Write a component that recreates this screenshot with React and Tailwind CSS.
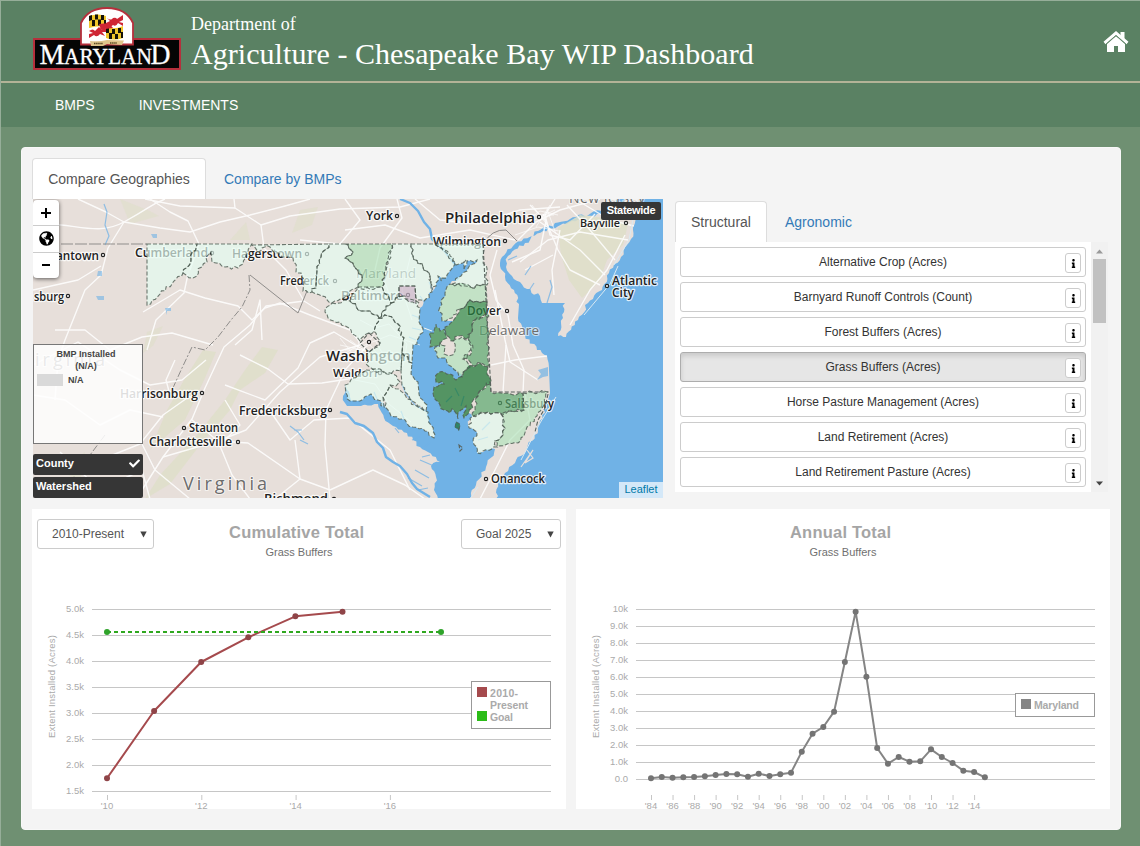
import React from "react";
import { FaInfo, FaCheck, FaGlobeAmericas } from "react-icons/fa";

const PALE = "#e4fcf2";
const LIGHT = "#b2e3bc";
const MID = "#57a66b";
const STRONG = "#2a8742";
const DARK = "#0f702b";

// Adds a small repeatable wobble to natural borders; straight survey lines stay straight.
function noise(a, b, c) {
  const v = Math.sin(a * 12.9898 + b * 78.233 + c * 37.719) * 43758.5453;
  return (v - Math.floor(v)) * 2 - 1;
}

function roughSegment(a, b) {
  const dx = b[0] - a[0];
  const dy = b[1] - a[1];
  const len = Math.hypot(dx, dy);
  if (len < 5 || len > 60 || Math.abs(dx) < 2 || Math.abs(dy) < 1) return [b];
  const flip = a[0] > b[0];
  const [s, e] = flip ? [b, a] : [a, b];
  const n = Math.max(2, Math.round(len / 3.2));
  const pts = [];
  for (let i = 1; i < n; i++) {
    const t = i / n;
    const k = noise(s[0] + e[0], s[1] + e[1], i) * 1.9;
    pts.push([s[0] + (e[0] - s[0]) * t - ((e[1] - s[1]) / len) * k, s[1] + (e[1] - s[1]) * t + ((e[0] - s[0]) / len) * k]);
  }
  if (flip) pts.reverse();
  return [...pts, b];
}

function roughen(d) {
  const nums = d.match(/-?\d+(\.\d+)?/g).map(Number);
  const pts = [];
  for (let i = 0; i < nums.length; i += 2) pts.push([nums[i], nums[i + 1]]);
  let out = `M${pts[0].join(" ")}`;
  pts.forEach((p, i) => {
    roughSegment(p, pts[(i + 1) % pts.length]).forEach(([x, y]) => {
      out += ` L${x.toFixed(1)} ${y.toFixed(1)}`;
    });
  });
  return out + "Z";
}

const counties = [
  [PALE, "M147 244 L197 244 L191 259 L183 273 L172 284 L160 294 L147 305Z"],
  [PALE, "M197 244 L252 244 L246 255 L243 264 L238 268 L225 267 L216 263 L212 262 L211 252 L202 267 L193 278 L183 273 L191 259Z"],
  [PALE, "M252 245 L329 244 L321 257 L317 270 L316 285 L312 292 L303 291 L304 281 L301 273 L296 272 L293 258 L285 257 L278 253 L270 247 L262 248 L258 252Z"],
  [PALE, "M329 244 L345 244 L353 252 L345 258 L354 266 L362 275 L358 287 L346 296 L332 303 L322 296 L312 292 L316 285 L317 270 L321 257Z"],
  [LIGHT, "M345 244 L392 244 L390 254 L386 270 L382 287 L370 289 L358 287 L362 275 L354 266 L345 258 L353 252Z"],
  [PALE, "M392 244 L411 244 L413 256 L423 267 L430 276 L432 292 L424 301 L416 298 L415 286 L399 286 L399 297 L391 303 L382 287 L386 270Z"],
  [PALE, "M411 244 L435 244 L447 251 L455 264 L447 275 L441 281 L438 276 L436 286 L432 290 L430 276 L423 267 L413 256Z"],
  [PALE, "M435 244 L483 244 L487 285 L470 287 L452 284 L461 276 L467 271 L473 264 L477 260 L467 261 L464 270 L466 260 L456 265 L448 254Z"],
  [PALE, "M358 287 L382 287 L391 303 L383 311 L379 318 L370 311 L361 311 L350 301Z"],
  [PALE, "M332 303 L350 301 L361 311 L370 311 L379 318 L374 331 L369 333 L360 341 L351 330 L340 322 L328 318 L325 312Z"],
  [PALE, "M391 303 L399 297 L416 301 L420 308 L419 322 L423 329 L417 344 L413 345 L412 363 L402 353 L403 341 L398 324 L388 316 L379 318 L383 311Z"],
  [PALE, "M379 318 L388 316 L398 324 L403 341 L402 353 L401 371 L387 374 L374 370 L366 364 L369 352 L380 343 L374 331Z"],
  [PALE, "M402 353 L412 363 L411 374 L418 382 L419 394 L427 405 L426 411 L418 406 L409 396 L402 386 L401 371Z"],
  [PALE, "M366 370 L380 369 L393 374 L400 382 L396 386 L390 385 L383 397 L384 407 L378 400 L371 394 L360 401 L350 401 L346 393 L345 385Z"],
  [PALE, "M390 385 L399 389 L407 399 L418 407 L428 412 L431 425 L434 438 L425 431 L413 427 L402 419 L391 416 L385 407 L383 397Z"],
  [LIGHT, "M450 284 L461 283 L471 287 L486 285 L487 302 L470 300 L460 309 L452 318 L442 321 L440 307 L445 293Z"],
  [STRONG, "M487 302 L470 300 L460 309 L453 321 L445 327 L446 335 L451 341 L458 336 L469 338 L473 321 L487 313Z"],
  [STRONG, "M436 324 L440 331 L445 329 L447 338 L441 342 L436 346 L430 347 L431 338 L429 333 L434 333Z"],
  [MID, "M487 313 L475 320 L468 338 L472 352 L463 358 L473 366 L481 363 L489 366Z"],
  [LIGHT, "M453 341 L462 337 L469 340 L473 349 L463 359 L470 367 L462 377 L452 367 L446 358 L438 358 L434 350 L440 343 L445 346 L444 354 L449 356 L455 351Z"],
  [DARK, "M488 367 L480 363 L474 367 L468 366 L463 376 L456 380 L450 374 L438 373 L436 382 L444 384 L434 387 L433 393 L440 405 L444 410 L450 413 L452 409 L458 419 L461 410 L466 406 L464 418 L469 413 L478 393 L490 384Z"],
  [MID, "M490 382 L491 392 L523 394 L524 410 L500 413 L488 412 L472 416 L478 394Z"],
  [LIGHT, "M523 393 L548 392 L545 403 L537 416 L527 427 L518 443 L497 446 L495 441 L503 435 L505 428 L501 414 L524 410Z"],
  [PALE, "M473 416 L488 412 L500 413 L505 428 L503 435 L495 441 L497 447 L477 453 L473 442 L477 432 L468 425Z"],
  [DARK, "M456 422 L460 424 L459 431 L455 428Z"],
  ["#cdb9cf", "M399 286 L415 286 L416 304 L409 302 L405 296 L399 296Z"],
].map(([c, d]) => [c, roughen(d)]);

const land = [
  "M33 199 L620 199 L604 210 L570 219 L538 231 L513 246 L502 257 L500 266 L505 277 L514 290 L519 304 L518 318 L525 335 L537 350 L547 356 L549 370 L550 393 L546 403 L538 430 L527 448 L515 463 L505 473 L498 483 L496 499 L469 499 L476 485 L486 467 L495 449 L477 453 L473 442 L477 432 L468 425 L472 417 L469 413 L464 418 L466 406 L461 410 L458 419 L452 409 L450 413 L444 410 L440 405 L433 393 L434 387 L444 384 L436 382 L438 373 L450 374 L456 380 L463 376 L452 367 L446 358 L438 358 L434 350 L440 343 L446 335 L445 327 L453 321 L442 321 L440 307 L445 293 L450 284 L461 276 L467 271 L473 264 L477 260 L467 261 L464 270 L466 260 L456 265 L455 264 L447 275 L441 281 L438 276 L436 286 L432 292 L424 301 L420 308 L419 322 L423 329 L417 344 L413 345 L412 363 L411 374 L418 382 L419 394 L427 405 L426 411 L431 425 L434 438 L425 431 L413 427 L402 419 L391 416 L385 407 L378 400 L371 394 L360 401 L350 401 L345 385 L343 396 L347 406 L361 406 L378 404 L384 418 L396 427 L407 433 L420 447 L440 462 L431 466 L436 477 L434 490 L438 499 L33 499Z",
  "M640 199 L636 218 L631 239 L621 257 L609 273 L602 290 L588 303 L578 320 L566 337 L558 336 L563 318 L565 303 L542 303 L540 296 L527 289 L512 276 L506 267 L508 256 L525 243 L543 231 L572 221 L607 212 L625 199Z",
  "M436 324 L440 331 L445 329 L447 338 L441 342 L436 346 L430 347 L431 338 L429 333 L434 333Z",
].map(roughen);

const roads = [
  "M33 225 C70 220 95 238 124 222 S150 205 165 199", "M78 199 L106 212 L124 222 L108 248 L101 275 L85 290 L65 340 L58 360 L55 400",
  "M124 222 L160 228 L190 232 L220 222 L250 215 L285 206 L310 199", "M150 199 L170 212 L188 221 L199 244 L190 270",
  "M234 199 L235 208 L261 225 L290 216 L340 209 L400 207 L430 199", "M235 208 L180 206 L145 199", "M261 225 L264 248 L286 270 L304 301 L320 311",
  "M33 290 L78 280 L101 266", "M55 330 L85 330 L110 350 L142 337 L172 333 L213 345", "M33 365 L78 342 L120 370 L150 385 L182 380 L206 360",
  "M143 312 L180 290 L205 298 L238 306 L252 320 L265 308 L280 303 L310 315 L350 330 L362 345", "M188 274 L184 293 L156 320 L147 350",
  "M304 301 L266 306 L250 325 L224 347 L205 388 L192 419 L163 457 L142 490", "M262 340 L260 300 L252 330 L235 345", "M360 345 L320 357 L280 392 L246 430 L218 441 L163 457",
  "M365 348 L345 370 L326 410 L325 445 L330 499", "M360 348 L334 332 L310 343 L298 368 L265 400 L225 385", "M218 441 L248 443 L300 479 L330 490", "M192 420 L218 441 L232 475 L250 499",
  "M240 355 L268 369 L288 384 L322 383 L355 378", "M190 396 L163 415 L140 444 L100 460 L33 470", "M268 408 L290 440 L314 420 L350 418 L390 450 L410 490", "M225 400 L240 425 L225 440",
  "M330 490 L373 470 L405 485 L425 499", "M275 499 L300 479 L295 440", "M60 452 L100 490 L142 470 L150 499", "M142 444 L155 470 L190 499",
  "M345 230 L385 225 L420 238 L470 230 L515 240", "M397 199 L402 218 L380 248 L375 270", "M415 199 L440 220 L478 224 L520 210 L560 207", "M345 199 L360 220 L340 244 L300 240",
  "M497 250 L490 275 L496 300 L508 315 L513 345 L524 370 L523 393", "M495 290 L505 340 L510 362 L538 380", "M491 365 L515 360 L547 356", "M506 345 L503 392", "M525 394 L530 420 L510 440 L495 470 L480 499",
  "M518 240 L536 222 L560 210 L600 199", "M543 214 L558 250 L570 270 L600 285", "M520 262 L548 240 L580 232 L628 240", "M560 230 L552 270 L554 295", "M540 222 L580 250 L605 275", "M567 205 L590 230 L615 260", "M575 199 L610 220 L634 226", "M553 255 L525 270", "M570 325 L590 290 L607 270 L625 235",
  "M555 199 L545 215 L550 235 L570 240 L595 214", "M530 205 L546 221 L540 250 L512 262", "M33 395 L65 400 L100 425 L130 410 L163 417", "M175 360 L166 380 L170 395 L192 397",
];

const locals = [
  "M360 320 l15 8 l14 -4 l18 20 l-4 22 l-16 8 M390 248 l-8 25 l10 30 l-20 30 M412 250 l-10 40 l10 30 M420 345 l-30 -10 l-30 12 M355 380 l20 4 l14 20 l22 18",
  "M340 338 l12 15 l18 -8 l10 12 M345 350 h28 M350 340 l24 18 M357 360 l18 -27 M337 358 l34 -20 M360 335 l-5 26 M375 340 l10 18 M340 345 l26 6",
  "M520 225 l20 -14 l18 4 M524 215 h30 M530 222 l25 -12 M532 205 l16 21 M550 205 l-14 22 M515 235 l23 -8 l21 4 M547 209 l9 25",
];

const waters = [
  "M400 199 L410 203 L418 211 L424 222 L430 229 L432 239 L444 250 L456 266",
  "M340 412 L347 414 L355 423 L364 426 L373 433 L377 442 L383 448 L386 457 L393 462 L400 466 L407 474 L412 483 L417 489 L430 497",
];
const creeks = [
  "M104 204 L107 212 L105 225 L109 236 L105 245", "M547 303 L552 287 L550 280 M525 275 l6 -9 M508 260 l9 -4 M530 289 l4 -6",
  "M427 412 L415 405 L406 394 L402 384", "M290 426 l8 6 l6 8 M300 440 l8 4 M294 430 l8 0", "M425 303 l-5 -7 M433 290 l-4 -8 M440 286 l2 -9",
  "M412 440 l8 -3 M424 448 l6 -6 M420 460 l14 6 M415 470 l14 8 M408 478 l14 8 M418 490 l10 -2 M395 428 l4 5 M430 455 l-8 2",
  "M420 318 l-8 -3 M421 330 l-9 -2 M416 340 l-7 -3 M413 355 l-5 0 M378 401 l-4 -9 M404 419 l-3 -8 M482 430 l8 -8 M478 440 l10 -3 M455 388 l4 8 M446 402 l6 -6 M464 396 l-3 10",
];

const labels = [
  [366, 220, 12, "York", 27], [445, 223, 15, "Philadelphia", 90], [433, 246, 12, "Wilmington", 68], [580, 227, 11.5, "Bayville", 40],
  [612, 285, 12, "Atlantic", 45], [612, 297, 12, "City", 22], [467, 315, 12, "Dover", 34], [135, 257, 12, "Cumberland", 73],
  [232, 258, 12, "Hagerstown", 70], [280, 285, 12, "Frederick", 49], [341, 300, 12, "Baltimore", 62], [326, 361, 14.5, "Washington", 85],
  [333, 377, 11.5, "Waldorf", 45], [120, 398, 12, "Harrisonburg", 78], [239, 415, 12, "Fredericksburg", 88], [189, 432, 12, "Staunton", 49],
  [149, 446, 12, "Charlottesville", 83], [491, 483, 12, "Onancock", 54], [505, 408, 12, "Salisbury", 49], [264, 503, 13, "Richmond", 64],
  [34, 301, 12, "sburg", 30], [56, 260, 12, "antown", 43],
];
const dots = [[397, 216], [539, 217], [505, 241], [626, 223], [607, 286], [507, 311], [212, 253], [307, 254], [335, 281], [408, 295], [369, 342], [380, 373], [202, 393], [330, 410], [184, 428], [238, 442], [486, 479], [500, 403], [334, 499], [103, 255], [68, 296]];

function BaseMap() {
  return (
    <svg viewBox="33 199 630 299" className="block h-full w-full" fontFamily="'Open Sans','Noto Sans',sans-serif">
      <rect x="33" y="199" width="630" height="300" fill="#70b2e6" />
      <g fill="#e7dfda">{land.map((d) => <path key={d} d={d} />)}</g>
      <g fill="#dedfc8">
        <path d="M558 228 L580 215 L605 218 L628 224 L623 245 L607 260 L599 282 L582 298 L569 280 L561 255Z" opacity=".85" />
        <path d="M167 410 L184 380 L203 350 L216 352 L205 378 L185 420 L150 450Z" opacity=".8" />
        <path d="M245 370 L262 347 L278 350 L265 373 L240 390 L230 410 L200 445 L170 484 L145 499 L160 475 L197 435 L225 400Z" opacity=".8" />
        <path d="M120 199 L150 211 L159 216 L130 224 Z M230 240 L246 222 L250 240Z M300 210 l18 -3 l-6 18 l-20 8Z" opacity=".55" />
        <path d="M147 332 l16 -6 l-10 20 l-10 7Z M60 470 l25 -18 l-5 30Z" opacity=".55" />
      </g>
      <g fill="none" stroke="#fff" strokeWidth="1.4" strokeLinejoin="round" opacity=".85">{roads.map((d) => <path key={d} d={d} />)}</g>
      <g fill="none" stroke="#fff" strokeWidth=".8" opacity=".8">{locals.map((d) => <path key={d} d={d} />)}</g>
      <g fill="none" stroke="#70b2e6" strokeWidth="2.4" strokeLinejoin="round">{waters.map((d) => <path key={d} d={d} />)}</g>
      <g fill="none" stroke="#70b2e6" strokeWidth="1.2" strokeLinejoin="round" opacity=".75">{creeks.map((d) => <path key={d} d={d} />)}</g>
      <g fill="#70b2e6">
        <path d="M97 276 h5 v-5 h-4Z M151 234 h6 v4 h-4Z M96 296 h8 v4 h-6Z M165 308 h6 v3 h-4 v4Z" opacity=".6" />
        <path d="M345 384 l3 18 l15 3 l13 -4 l-5 -4 l-11 4 l-9 -1Z" />
        <path d="M538 370 l10 -3 v9 l-5 1 l-6 3 l4 -6Z" opacity=".7" />
      </g>
      <path d="M637 199 L629 240 L614 265 M556 397 L540 423 L521 460 M470 499 l8 -12 M618 266 l-8 18 l-26 31" fill="none" stroke="#d9e9f2" strokeWidth="1" />
      <path d="M527 450 l6 8 l-8 5 l8 -13 l-12 17" fill="none" stroke="#e7dfda" strokeWidth="1.2" />
      <g fill="none" stroke="#8f8d8b" strokeWidth="1">
        <path d="M33 244 H147" strokeDasharray="12 2" />
        <path d="M250 275 L298 313 L307 291" />
        <path d="M249 275 L250 290 L242 307 L231 320 L218 337 L205 350 L192 347 L182 368 L172 390 M105 435 L90 455 L75 475 L60 499" strokeDasharray="7 2 2 2" />
        <path d="M483 244 Q492 229 506 230 L517 241" />
      </g>
      <g fill="#222" stroke="#fff" strokeWidth="2.4" strokeOpacity=".8" paintOrder="stroke" strokeLinejoin="round" fontWeight="600">
        {labels.map(([x, y, s, t, w]) => (
          <text key={t} x={x} y={y} fontSize={s} textLength={w} lengthAdjust="spacingAndGlyphs">{t}</text>
        ))}
      </g>
      <g fill="#6c6c6c" stroke="#fff" strokeWidth="2" strokeOpacity=".6" paintOrder="stroke">
        <text x="479" y="335" fontSize="13.5" textLength="60">Delaware</text>
        <text x="356" y="278" fontSize="13.5" textLength="60">Maryland</text>
        <text x="183" y="490" fontSize="18" textLength="84">Virginia</text>
        <text x="35" y="366" fontSize="18" textLength="70">irginia</text>
        <text x="569" y="203" fontSize="14" textLength="76">New Jersey</text>
      </g>
      <g fill="#fff" stroke="#222" strokeWidth="1.2">{dots.map(([x, y]) => <circle key={x + "-" + y} cx={x} cy={y} r="1.6" />)}</g>
      <g stroke="none" fillOpacity=".68">{counties.map(([c, d]) => <path key={d} d={d} fill={c} />)}</g>
      <g fill="none" stroke="#4b5a50" strokeWidth="1.1" strokeDasharray="4 2" strokeOpacity=".8">{counties.map(([, d]) => <path key={d} d={d} />)}</g>
      <g fill="none" stroke="#59635e" strokeWidth="1.1" strokeDasharray="4 2">
        <path d="M369 333 l11 10 l-11 9 l-9 -9Z M548 394 l-3 14 l-7 12 l-3 12 M459 445 l4 3 l-3 3Z M483 244 L491 392 H548" />
      </g>
      <path d="M424 328 l8 3" stroke="#eef6f8" strokeWidth="1" />
    </svg>
  );
}

function MarylandLogo() {
  return (
    <svg width="148" height="65" viewBox="0 0 148 65" className="block">
      <rect x="1" y="33" width="146" height="30" fill="#050505" stroke="#b5303c" strokeWidth="2" />
      <path d="M48 38.500 V17 Q55 2 74 2 Q93 2 100 17 V38.500Z" fill="#fff" stroke="#b5303c" strokeWidth="1.8" />
      <g transform="translate(0 1)">
        <path d="M56 9 Q65 6 73 9 Q82 12 90 8 V31 Q81 34 73 31 Q64 28 56 32Z" fill="#fff" />
        <path d="M56 9 Q65 6 73 9 V20 Q65 18 56 21Z M73 20 Q82 23 90 19 V31 Q81 34 73 31Z" fill="#f0c62a" />
        <path d="M56 9 l3 -1 v5 l-3 1Z M62 7.500 h3 v5 h-3Z M68 8 h3 v5 h-3Z M59 13 h3 v6 h-3Z M65 12.500 h3 v6 h-3Z M71 13 h2 v7 h-2Z M73 20 h3 v6 h-3Z M79 22 h3 v5 h-3Z M85 21 h3 v5 h-3Z M76 26 h3 v6 h-3Z M82 27 h3 v5 h-3Z M88 25 h2 v6 h-2Z" fill="#161208" />
        <path d="M74 11 q4 3 6 0 q3 -1 4 1 l6 -4 v5 l-4 2 l4 1 v3 l-5 -3 q-2 4 -5 2 l-4 3 l-3 -1 v-4 l4 -2Z M56 24 q4 -3 6 0 l4 -4 l3 3 l4 -3 v5 l-4 0 l3 4 l-5 -2 q-3 4 -6 1 l-5 3 v-4 l4 -1Z M66 17 l10 -1 l4 5 l-8 1 l-4 1Z" fill="#cf2634" />
      </g>
      <path d="M57 35 Q66 36 74 34 L91 34.500 L89 39 L79 38.500 L74 38 L70 40 L58 40Z" fill="#dfc58a" />
      <path d="M61 37.500 h9 M77 37 h7" stroke="#5b4a23" strokeWidth="1.4" strokeDasharray="1.500 .6" />
      <g fill="#fff" fontFamily="'Liberation Serif',serif" stroke="#fff" strokeWidth=".3">
        <text x="6.500" y="58" fontSize="29" textLength="25" lengthAdjust="spacingAndGlyphs">M</text>
        <text x="31" y="58" fontSize="22.500" textLength="88" lengthAdjust="spacingAndGlyphs">ARYLAN</text>
        <text x="117.500" y="58" fontSize="29" textLength="20" lengthAdjust="spacingAndGlyphs">D</text>
      </g>
    </svg>
  );
}

const bmps = ["Alternative Crop (Acres)", "Barnyard Runoff Controls (Count)", "Forest Buffers (Acres)", "Grass Buffers (Acres)", "Horse Pasture Management (Acres)", "Land Retirement (Acres)", "Land Retirement Pasture (Acres)"];

function BmpRow({ name, active }) {
  return (
    <div className={"flex h-[30px] shrink-0 items-center rounded-[3px] border pr-1 text-xs text-[#333] " + (active ? "border-[#adadad] bg-[#e6e6e6] shadow-[inset_0_3px_5px_rgba(0,0,0,0.125)]" : "border-[#ccc] bg-white")}>
      <span className="flex-1 pb-px pl-5 text-center">{name}</span>
      <span className="mt-0.5 flex h-5 w-4 items-center justify-center rounded-[3px] border border-[#ccc] bg-white text-black">
        <FaInfo size={9} />
      </span>
    </div>
  );
}

function Select({ children, className }) {
  return (
    <div className={"flex h-[30px] items-center justify-between rounded-[3px] border border-[#ccc] bg-white pr-1.5 pl-3.5 text-xs text-[#555] " + className}>
      <span>{children}</span>
      <svg width="7" height="7" viewBox="0 0 7 7"><path d="M.3 .5 H6.700 L3.500 6.500Z" fill="#444" /></svg>
    </div>
  );
}

const cumulative = [778.3, 711, 662, 637.3, 616.3, 611.7];
const annual = [820, 816, 818, 817, 816, 814, 810, 807, 808, 815, 806, 813, 808, 803, 740, 686, 666, 620, 471, 320, 515, 729, 776, 756, 770, 769, 733, 756, 774, 797, 801, 817].map((v) => v / 3 + 505);

function Axis({ x1, x2, labels: ticks, top, step, title, titleX }) {
  return (
    <g fontSize="9.500" fill="#aaa">
      {ticks.map((t, i) => (
        <g key={t}>
          <path d={`M${x1} ${top + i * step + 0.5} H${x2}`} stroke="#c6c6c6" />
          <text x={x1 - 8} y={top + i * step + 3} textAnchor="end">{t}</text>
        </g>
      ))}
      <text transform={`translate(${titleX} 738) rotate(-90)`} textLength="103">{title}</text>
    </g>
  );
}

function Series({ pts, color, dot }) {
  return (
    <g>
      <polyline points={pts.map((p) => p.join(",")).join(" ")} fill="none" stroke={color} strokeWidth="2" strokeLinejoin="round" />
      {pts.map(([x, y]) => <circle key={x} cx={x} cy={y} r="3" fill={dot} />)}
    </g>
  );
}

function CumulativeChart() {
  const pts = cumulative.map((y, i) => [107 + i * 47.1, y]);
  return (
    <svg width="534" height="300" viewBox="32 509 534 300" className="block [grid-area:1/1]" fontFamily="'Liberation Sans',Arial,sans-serif">
      <text x="229" y="538" fontSize="16.500" fontWeight="700" fill="#a5a5a5" textLength="135">Cumulative Total</text>
      <text x="265.500" y="556" fontSize="11" fill="#707070" textLength="67">Grass Buffers</text>
      <Axis x1={92} x2={551} top={609} step={26} titleX={55} title="Extent Installed (Acres)" labels={["5.0k", "4.5k", "4.0k", "3.5k", "3.0k", "2.5k", "2.0k", "1.5k"]} />
      {["'10", "'12", "'14", "'16"].map((t, i) => (
        <g key={t}>
          <path d={`M${107.5 + i * 94.3} 795 v5`} stroke="#c6c6c6" />
          <text x={107 + i * 94.3} y="808.500" fontSize="9.500" fill="#aaa" textAnchor="middle">{t}</text>
        </g>
      ))}
      <Series pts={pts} color="#a54a4d" dot="#8f4448" />
      <path d="M107 632 H441" stroke="#2fa81f" strokeWidth="2" strokeDasharray="4 3" />
      <circle cx="107" cy="632" r="3" fill="#2fa32a" />
      <circle cx="441" cy="632" r="3" fill="#2fa32a" />
      <rect x="471.500" y="681.500" width="79" height="47" fill="#fff" stroke="#999" />
      <rect x="477" y="687" width="10" height="10" fill="#a54a4d" />
      <rect x="477" y="711" width="10" height="10" fill="#2bbc18" />
      <g fontSize="10.500" fontWeight="700" fill="#aaa">
        <text x="490" y="697" textLength="28">2010-</text>
        <text x="490" y="709" textLength="38">Present</text>
        <text x="490" y="721" textLength="23">Goal</text>
      </g>
    </svg>
  );
}

function AnnualChart() {
  const pts = annual.map((y, i) => [651 + i * 10.77, y]);
  const years = ["84", "86", "88", "90", "92", "94", "96", "98", "00", "02", "04", "06", "08", "10", "12", "14"];
  return (
    <svg width="534" height="300" viewBox="576 509 534 300" className="block" fontFamily="'Liberation Sans',Arial,sans-serif">
      <text x="790" y="538" fontSize="16.500" fontWeight="700" fill="#a5a5a5" textLength="101">Annual Total</text>
      <text x="809.500" y="556" fontSize="11" fill="#707070" textLength="67">Grass Buffers</text>
      <Axis x1={636} x2={1095} top={609} step={17} titleX={599} title="Extent Installed (Acres)" labels={["10k", "9.0k", "8.0k", "7.0k", "6.0k", "5.0k", "4.0k", "3.0k", "2.0k", "1.0k", "0.0"]} />
      {years.map((t, i) => (
        <g key={t}>
          <path d={`M${651.5 + i * 21.54} 795 v5`} stroke="#c6c6c6" />
          <text x={651 + i * 21.54} y="808.500" fontSize="9.500" fill="#aaa" textAnchor="middle">{"'" + t}</text>
        </g>
      ))}
      <Series pts={pts} color="#858585" dot="#747474" />
      <rect x="1015.500" y="693.500" width="79" height="23" fill="#fff" stroke="#999" />
      <rect x="1021" y="699" width="10" height="10" fill="#858585" />
      <text x="1034" y="709" fontSize="10.500" fontWeight="700" fill="#aaa" textLength="45">Maryland</text>
    </svg>
  );
}

function HomeIcon() {
  return (
    <svg width="26" height="22" viewBox="0 0 26 22" className="mt-[25px] mr-px ml-auto block">
      <path d="M1.500 12 L13 2 L24.500 12" fill="none" stroke="#fff" strokeWidth="3" strokeLinejoin="miter" />
      <path d="M17.500 1 H21.500 V8 L17.500 5Z" fill="#fff" />
      <path d="M4 13 L13 5.200 L22 13 V21 H15 V15 H11 V21 H4Z" fill="#fff" />
      <path d="M3.200 12.800 L13 4.400 L22.800 12.800" fill="none" stroke="#5a8163" strokeWidth=".7" />
    </svg>
  );
}

export default function App() {
  return (
    <div className="flex h-[846px] w-[1140px] flex-col overflow-hidden border-t border-l border-[#96ae99] bg-[#6f9072] font-['Liberation_Sans',Arial,sans-serif] text-sm">
      <header className="flex h-[80px] shrink-0 items-start bg-[#5a8163] pt-[5px] pr-2.5 pl-8">
        <MarylandLogo />
        <div className="ml-[10px] font-['Liberation_Serif',serif] text-white">
          <div className="mt-2 text-lg leading-5 tracking-[0.03px]">Department of</div>
          <h1 className="mt-[2px] text-[30px] leading-9 tracking-[0.05px]">Agriculture - Chesapeake Bay WIP Dashboard</h1>
        </div>
        <HomeIcon />
      </header>
      <nav className="flex h-[46px] shrink-0 items-center gap-11 border-t-2 border-[#b3b397] bg-[#5a8163] pl-[54px] text-white">
        <a>BMPS</a>
        <a>INVESTMENTS</a>
      </nav>
      <main className="mt-5 ml-5 flex h-[683px] w-[1100px] shrink-0 flex-col rounded border border-[#f8f8f8] bg-[#f4f4f4] px-[10px] pt-[10px]">
        <div className="flex">
          <section className="flex w-[631px] flex-col">
            <div className="flex h-[41px] items-center">
              <div className="flex h-[41px] w-[174px] items-center justify-center rounded-t border border-b-0 border-[#ddd] bg-white text-[#555]">Compare Geographies</div>
              <a className="pl-[18px] text-[#337ab7]">Compare by BMPs</a>
            </div>
            <div className="relative ml-px h-[299px] w-[630px] overflow-hidden">
              <BaseMap />
              <div className="absolute top-px left-0 flex h-[78px] w-[26px] flex-col divide-y divide-[#ccc] rounded bg-white text-black shadow-[0_1px_4px_rgba(0,0,0,0.6)]">
                <div className="flex flex-1 items-center justify-center"><svg width="10" height="10"><path d="M5 0 V10 M0 5 H10" stroke="#000" strokeWidth="2" /></svg></div>
                <div className="flex flex-1 items-center justify-center"><FaGlobeAmericas size={15} /></div>
                <div className="flex flex-1 items-center justify-center"><svg width="8" height="2"><path d="M0 1 H8" stroke="#000" strokeWidth="2" /></svg></div>
              </div>
              <div className="absolute top-[145px] left-0 h-[100px] w-[110px] border border-[#777] bg-white/85 pt-[3px] text-[9px] leading-3 font-bold text-[#444]">
                <div className="pl-[22px]"><div className="w-[60px] text-center leading-3 whitespace-nowrap">BMP Installed<br />(N/A)</div></div>
                <div className="mt-[2px] flex items-center gap-[5px] pl-[3px] leading-3"><span className="h-3 w-[26px] bg-[#d9d9d9]" />N/A</div>
              </div>
              <div className="absolute top-[255px] left-0 flex w-[110px] flex-col gap-0.5 text-[11px] font-bold text-white">
                <div className="flex h-[21px] items-center justify-between rounded-[2px] bg-[#363636] px-[3px] pb-0.5">County <FaCheck size={11} /></div>
                <div className="flex h-[21px] items-center rounded-[2px] bg-[#363636] px-[3px] pb-0.5">Watershed</div>
              </div>
              <div className="absolute top-[3px] right-[2px] flex h-[18px] w-[60px] items-center justify-center rounded-[2px] bg-[#363636] text-[11px] font-bold tracking-[-0.3px] text-white">Statewide</div>
              <div className="absolute right-0 bottom-0 flex h-[16px] w-[44px] items-center justify-center bg-white/70 text-[11px] text-[#0078a8]">Leaflet</div>
            </div>
          </section>
          <section className="mt-[43px] ml-[12px] w-[433px]">
            <div className="flex h-[41px] items-center">
              <div className="flex h-[41px] w-[92px] items-center justify-center rounded-t border border-b-0 border-[#ddd] bg-white text-[#555]">Structural</div>
              <a className="pl-[18px] text-[#337ab7]">Agronomic</a>
            </div>
            <div className="flex h-[250px]">
              <div className="flex w-[416px] flex-col gap-[5px] overflow-hidden bg-white px-[5px] pt-[5px]">
                {bmps.map((b) => <BmpRow key={b} name={b} active={b === "Grass Buffers (Acres)"} />)}
              </div>
              <div className="flex w-[17px] flex-col items-center bg-[#f1f1f1]">
                <svg width="17" height="17" className="shrink-0"><path d="M5 11.500 L8.500 7.500 L12 11.500Z" fill="#9a9a9a" /></svg>
                <div className="h-[64px] w-[13px] bg-[#c1c1c1]" />
                <svg width="17" height="17" className="mt-auto shrink-0"><path d="M5 6.500 L8.500 10.500 L12 6.500Z" fill="#444" /></svg>
              </div>
            </div>
          </section>
        </div>
        <div className="mt-[11px] flex gap-[10px]">
          <section className="grid h-[300px] w-[534px] bg-white">
            <CumulativeChart />
            <div className="flex items-start justify-between self-start px-[5px] pt-[10px] [grid-area:1/1]">
              <Select className="w-[117px]">2010-Present</Select>
              <Select className="w-[100px]">Goal 2025</Select>
            </div>
          </section>
          <section className="h-[300px] w-[534px] bg-white"><AnnualChart /></section>
        </div>
      </main>
    </div>
  );
}
